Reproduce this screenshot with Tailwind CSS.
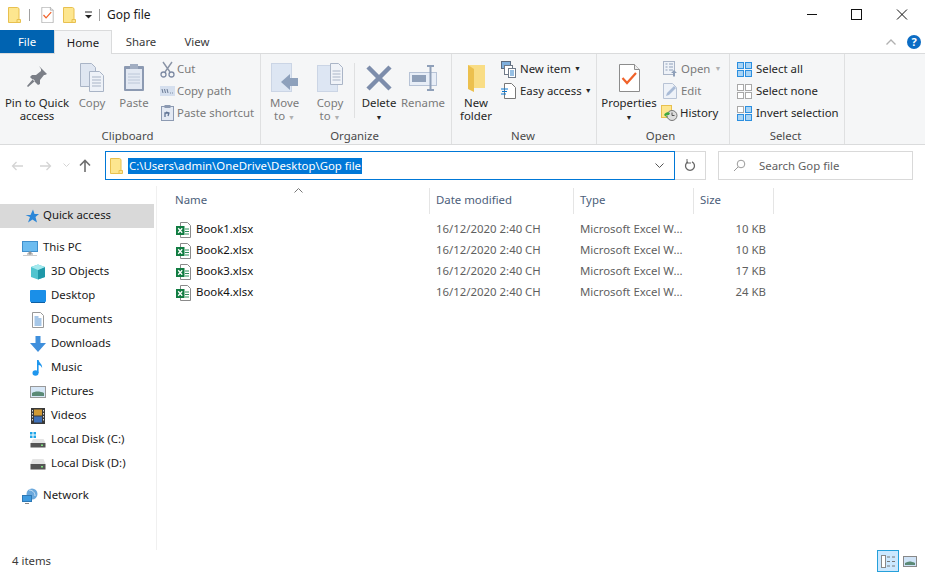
<!DOCTYPE html>
<html lang="en">
<head>
<meta charset="UTF-8">
<title>Gop file</title>
<script src="https://cdn.jsdelivr.net/npm/@tailwindcss/browser@4"></script>
</head>
<body class="bg-white">
<svg width="0" height="0" class="absolute">
  <defs>
    <symbol id="folder" viewBox="0 0 13 16" preserveAspectRatio="none"><path d="M.5.500h9l1.500 1v14H.5z" fill="#fde68f" stroke="#e8c04f"/><path d="M9 12.500h3.500v3H9z" fill="#fde68f" stroke="#e8c04f"/></symbol>
    <symbol id="xls" viewBox="0 0 17 16"><path d="M5.500 .5h7l3 3v12h-10z" fill="#fff" stroke="#8a8a8a"/><path d="M10 7h4M10 9.500h4M10 12h4" stroke="#2f8f5b"/><rect x="1" y="4" width="8.500" height="9" fill="#107c41"/><path d="M3.200 6.200l4 4.600M7.200 6.200l-4 4.600" stroke="#fff" stroke-width="1.300"/></symbol>
    <symbol id="prop" viewBox="0 0 21 28"><path d="M.5.500h15l5 5v22h-20z" fill="#fff" stroke="#8c8c8c"/><path d="M15.500.500v5h5" fill="#eee" stroke="#8c8c8c"/><path d="M3.500 14l4.500 5 9-10" fill="none" stroke="#f0622a" stroke-width="2.200"/></symbol>
    <symbol id="tile" viewBox="0 0 15 15"><rect x=".5" y=".5" width="6" height="6"/><rect x="8.500" y=".5" width="6" height="6"/><rect x=".5" y="8.500" width="6" height="6"/><rect x="8.500" y="8.500" width="6" height="6"/></symbol>
    <symbol id="disk" viewBox="0 0 16 12"><path d="M2.500 1h11l2 5h-15z" fill="#e4e4e4"/><rect x="0.500" y="6" width="15" height="5.500" fill="#555"/><rect x="11" y="8" width="2" height="1.500" fill="#7fe07f"/></symbol>
  </defs>
</svg>

<div class="w-[925px] h-[572px] overflow-hidden flex flex-col text-[11.4px] leading-[16px] text-[#1a1a1a] font-['Noto_Sans',sans-serif]">

  <!-- Title bar -->
  <div class="h-[30px] flex items-center shrink-0">
    <svg class="w-[13px] h-[16px] ml-[8px] shrink-0"><use href="#folder"/></svg>
    <div class="w-px h-[12px] bg-[#a0a0a0] ml-[8px]"></div>
    <svg class="w-[13px] h-[16px] ml-[11px] shrink-0"><use href="#prop"/></svg>
    <svg class="w-[13px] h-[16px] ml-[9px] shrink-0"><use href="#folder"/></svg>
    <svg class="w-[9px] h-[8px] ml-[8px] shrink-0" viewBox="0 0 9 8"><path d="M1 1h7" stroke="#222"/><path d="M1 4h7l-3.500 3.500z" fill="#222"/></svg>
    <div class="w-px h-[12px] bg-[#a0a0a0] ml-[6px]"></div>
    <span class="ml-[7px] text-[12px]">Gop file</span>
    <div class="ml-auto flex items-center">
      <svg class="w-[46px] h-[30px]" viewBox="0 0 46 30"><path d="M20 14.500h10" stroke="#111"/></svg>
      <svg class="w-[46px] h-[30px]" viewBox="0 0 46 30"><rect x="18.500" y="9.500" width="10" height="10" fill="none" stroke="#111"/></svg>
      <svg class="w-[46px] h-[30px]" viewBox="0 0 46 30"><path d="M18 9.500l10 10M28 9.500l-10 10" stroke="#111"/></svg>
    </div>
  </div>

  <!-- Tabs -->
  <div class="h-[23px] flex shrink-0 relative items-stretch">
    <div class="w-[54px] bg-[#0063b1] text-white flex items-center justify-center">File</div>
    <div class="w-[58px] h-[24px] bg-[#f5f6f7] border border-b-0 border-[#dadbdc] flex items-center justify-center relative z-10">Home</div>
    <div class="w-[58px] flex items-center justify-center text-[#3a3a3a]">Share</div>
    <div class="w-[54px] flex items-center justify-center text-[#3a3a3a]">View</div>
    <div class="ml-auto flex items-center">
      <svg class="w-[12px] h-[8px] mr-[10px]" viewBox="0 0 12 8"><path d="M1.500 6.500l4.500-4.500 4.500 4.500" fill="none" stroke="#b0b0b0" stroke-width="1.300"/></svg>
      <div class="w-[14px] h-[14px] mr-[4px] rounded-full bg-[#0b6cc4] text-white font-bold text-[11px] leading-[14px] text-center">?</div>
    </div>
  </div>

  <!-- Ribbon -->
  <div class="h-[92px] shrink-0 bg-[#f5f6f7] border-y border-[#dadbdc] flex text-[#7a7a7a]">
    <!-- Clipboard -->
    <div class="w-[261px] h-full border-r border-[#dfe0e1] flex flex-col shrink-0">
      <div class="h-[72px] flex">
        <div class="w-[74px] flex flex-col items-center text-[#262626] text-center">
          <svg class="w-[22px] h-[26px] mt-[11px] mb-[5px]" viewBox="0 0 22 26"><path d="M13 1l8 8-2 1-1 0-4 5 0 4-2 1-8-8 2-2h4l5-4v-2zM7 14l-6 7 1 1 7-6z" fill="#7b7f87"/></svg>
          <div class="leading-[13px]">Pin to Quick<br>access</div>
        </div>
        <div class="w-[36px] flex flex-col items-center">
          <svg class="w-[24px] h-[29px] mt-[9px] mb-[4px]" viewBox="0 0 24 29"><path d="M.5.500h11l4 4v19h-15z" fill="#dfe6f1" stroke="#a9b4c6"/><path d="M9.500 8.500h10l4 4v16h-14z" fill="#eef2f8" stroke="#a9b4c6"/><path d="M12 14h9M12 17h9M12 20h9M12 23h9" stroke="#a9b4c6"/></svg>
          <div class="leading-[13px]">Copy</div>
        </div>
        <div class="w-[48px] flex flex-col items-center">
          <svg class="w-[22px] h-[29px] mt-[9px] mb-[4px]" viewBox="0 0 22 29"><rect x="1" y="3" width="20" height="25" rx="1" fill="#8c9ab2"/><rect x="3" y="6" width="16" height="20" fill="#e3e9f3"/><rect x="7" y="1" width="8" height="5" fill="#a2aec2"/><path d="M5 11h12M5 14h12M5 17h12M5 20h12" stroke="#bcc7d8"/></svg>
          <div class="leading-[13px]">Paste</div>
        </div>
        <div class="flex flex-col ml-[2px] pt-[4px]">
          <div class="h-[22px] flex items-center gap-[2px]"><svg class="w-[15px] h-[17px]" viewBox="0 0 15 17"><path d="M3 1l7 10M12 1L5 11" stroke="#8a94a6" stroke-width="1.400"/><circle cx="3.500" cy="13.500" r="2.500" fill="none" stroke="#7d8aa3" stroke-width="1.300"/><circle cx="11.500" cy="13.500" r="2.500" fill="none" stroke="#7d8aa3" stroke-width="1.300"/></svg>Cut</div>
          <div class="h-[22px] flex items-center gap-[2px]"><svg class="w-[15px] h-[10px]" viewBox="0 0 15 10"><rect width="15" height="10" fill="#d5dfee"/><path d="M2 3l1 4M4.500 3l1 4M7 3l1 4M10 7h.8M12 7h.8" stroke="#6b7b95"/></svg>Copy path</div>
          <div class="h-[22px] flex items-center gap-[2px]"><svg class="w-[15px] h-[16px]" viewBox="0 0 13 16"><rect x=".5" y="1.500" width="12" height="14" fill="#e3e9f3" stroke="#8c9ab2"/><rect x="3.500" y="0" width="6" height="3" fill="#8c9ab2"/><path d="M4 12V8h4M5 7l3 1-1 3" fill="none" stroke="#5f7394" stroke-width="1.300"/></svg>Paste shortcut</div>
        </div>
      </div>
      <div class="text-center text-[#4a4a4a] pr-[5px] mt-[3px]">Clipboard</div>
    </div>

    <!-- Organize -->
    <div class="w-[191px] h-full border-r border-[#dfe0e1] flex flex-col shrink-0">
      <div class="h-[72px] flex">
        <div class="w-[47px] flex flex-col items-center">
          <svg class="w-[28px] h-[29px] mt-[9px] mb-[4px]" viewBox="0 0 28 29"><rect x=".5" y=".5" width="20" height="28" fill="#dde6f3" stroke="#cbd5e5"/><path d="M10 19l9-8v4h8v8h-8v4z" fill="#8ea1bc"/></svg>
          <div class="leading-[13px] text-center">Move<br>to <span class="text-[#b0b0b0] text-[7px]">▼</span></div>
        </div>
        <div class="w-[44px] flex flex-col items-center">
          <svg class="w-[26px] h-[29px] mt-[9px] mb-[4px]" viewBox="0 0 26 29"><rect x=".5" y="2.500" width="20" height="26" fill="#dde6f3" stroke="#cbd5e5"/><path d="M13.500.5h8l4 4v17h-12z" fill="#f0f3f8" stroke="#aab5c7"/><path d="M15.500 8h8M15.500 11h8M15.500 14h8M15.500 17h8" stroke="#aab5c7"/></svg>
          <div class="leading-[13px] text-center">Copy<br>to <span class="text-[#b0b0b0] text-[7px]">▼</span></div>
        </div>
        <div class="w-px h-[55px] bg-[#dfe0e1] mt-[9px] ml-[2px]"></div>
        <div class="w-[48px] flex flex-col items-center text-[#262626]">
          <svg class="w-[26px] h-[26px] mt-[11px] mb-[5px]" viewBox="0 0 26 26"><path d="M2 2l22 22M24 2L2 24" stroke="#7d8dab" stroke-width="4.500"/></svg>
          <div class="leading-[13px] text-center">Delete<br><span class="text-[7px]">▼</span></div>
        </div>
        <div class="w-[40px] flex flex-col items-center">
          <svg class="w-[28px] h-[26px] mt-[11px] mb-[5px]" viewBox="0 0 28 26"><rect x=".5" y="7.500" width="27" height="13" fill="#e8eef7" stroke="#b7c3d6"/><rect x="3" y="10" width="14" height="7" fill="#8fa0b9"/><path d="M18 1h7M21.500 1v24M18 25h7" stroke="#8fa0b9" stroke-width="2"/></svg>
          <div class="leading-[13px] text-center">Rename</div>
        </div>
      </div>
      <div class="text-center text-[#4a4a4a] mt-[3px] pr-[3px]">Organize</div>
    </div>

    <!-- New -->
    <div class="w-[145px] h-full border-r border-[#dfe0e1] flex flex-col shrink-0">
      <div class="h-[72px] flex">
        <div class="w-[48px] flex flex-col items-center text-[#262626]">
          <svg class="w-[19px] h-[28px] mt-[10px] mb-[4px]" viewBox="0 0 19 28"><path d="M1 1h17v23H1z" fill="#f9dd85"/><path d="M1 1l6 4v23l-6-3z" fill="#ecc04e"/></svg>
          <div class="leading-[13px] text-center">New<br>folder</div>
        </div>
        <div class="flex flex-col ml-[1px] pt-[4px] text-[#262626]">
          <div class="h-[22px] flex items-center gap-[4px]"><svg class="w-[15px] h-[17px]" viewBox="0 0 15 17"><rect x=".5" y=".5" width="9" height="7" fill="#7fb0de" stroke="#5b6b80"/><rect x="3.500" y="4.500" width="8" height="9" fill="#fff" stroke="#6f7a89"/><rect x="7.500" y="7.500" width="7" height="9" fill="#fff" stroke="#6f7a89"/><path d="M9 10h4M9 12h4M9 14h4" stroke="#2f80c9"/></svg>New item <span class="text-[7px] -ml-[1px]">▼</span></div>
          <div class="h-[22px] flex items-center gap-[4px]"><svg class="w-[15px] h-[16px]" viewBox="0 0 15 16"><path d="M3.500.5h7l4 4v11h-11z" fill="#fff" stroke="#777"/><path d="M0 6h7M1 8.500h5M0 11h5" stroke="#0a78d1"/></svg>Easy access <span class="text-[7px] -ml-[1px]">▼</span></div>
        </div>
      </div>
      <div class="text-center text-[#4a4a4a] mt-[3px] pr-[2px]">New</div>
    </div>

    <!-- Open -->
    <div class="w-[133px] h-full border-r border-[#dfe0e1] flex flex-col shrink-0">
      <div class="h-[72px] flex">
        <div class="w-[64px] flex flex-col items-center text-[#262626]">
          <svg class="w-[21px] h-[28px] mt-[10px] mb-[4px]"><use href="#prop"/></svg>
          <div class="leading-[13px] text-center">Properties<br><span class="text-[7px]">▼</span></div>
        </div>
        <div class="flex flex-col pt-[4px] ml-[2px]">
          <div class="h-[22px] flex items-center gap-[3px]"><svg class="w-[15px] h-[16px]" viewBox="0 0 15 16"><rect x=".5" y=".5" width="11" height="13" fill="#eef2f8" stroke="#aab5c7"/><path d="M2.500 3h2M2.500 6h2M2.500 9h2M6 3h4M6 6h4M6 9h4" stroke="#8fa0b9"/><path d="M8 12l3-3 3 3h-2v3.500h-2V12z" fill="#8fa0b9"/></svg>Open <span class="text-[#b0b0b0] text-[7px] ml-[1px]">▼</span></div>
          <div class="h-[22px] flex items-center gap-[3px]"><svg class="w-[15px] h-[16px]" viewBox="0 0 15 16"><path d="M.5.500h9l4 4v11H.5z" fill="#eef2f8" stroke="#b8c3d5"/><path d="M3 13l1-3 7-7 2 2-7 7z" fill="#a9bbd6"/></svg>Edit</div>
          <div class="h-[22px] flex items-center gap-[2px] -ml-[2px] text-[#262626]"><svg class="w-[17px] h-[16px]" viewBox="0 0 17 16"><rect x=".5" y=".5" width="10" height="12" fill="#fde68f" stroke="#e8c04f"/><circle cx="11" cy="10.500" r="5" fill="#ddd" stroke="#777"/><path d="M11 7.500v3h2.500" fill="none" stroke="#555"/><path d="M3 10a4 4 0 0 1 6-2l-1 2h-3l1.500 3z" fill="#3fa93f"/></svg>History</div>
        </div>
      </div>
      <div class="text-center text-[#4a4a4a] mt-[3px] pr-[5px]">Open</div>
    </div>

    <!-- Select -->
    <div class="w-[115px] h-full border-r border-[#dfe0e1] flex flex-col shrink-0 text-[#262626]">
      <div class="h-[72px] flex flex-col pt-[4px] pl-[7px]">
        <div class="h-[22px] flex items-center gap-[4px]"><svg class="w-[15px] h-[15px] fill-[#a9d4f5] stroke-[#2b8fe0]"><use href="#tile"/></svg>Select all</div>
        <div class="h-[22px] flex items-center gap-[4px]"><svg class="w-[15px] h-[15px] fill-white stroke-[#a8a8a8]"><use href="#tile"/></svg>Select none</div>
        <div class="h-[22px] flex items-center gap-[4px]"><svg class="w-[15px] h-[15px]" viewBox="0 0 15 15"><rect x=".5" y=".5" width="6" height="6" fill="#fff" stroke="#a8a8a8"/><rect x="8.500" y=".5" width="6" height="6" fill="#a9d4f5" stroke="#2b8fe0"/><rect x=".5" y="8.500" width="6" height="6" fill="#a9d4f5" stroke="#2b8fe0"/><rect x="8.500" y="8.500" width="6" height="6" fill="#a9d4f5" stroke="#2b8fe0"/></svg>Invert selection</div>
      </div>
      <div class="text-center text-[#4a4a4a] mt-[3px] pr-[3px]">Select</div>
    </div>
  </div>

  <!-- Address bar -->
  <div class="h-[41px] shrink-0 flex items-start pt-[6px]">
    <div class="w-[105px] h-[29px] flex items-center shrink-0">
      <svg class="w-[12px] h-[10px] ml-[11px]" viewBox="0 0 12 10"><path d="M5.500 1L1.500 5l4 4M1.500 5H12" fill="none" stroke="#d4d4d4" stroke-width="1.300"/></svg>
      <svg class="w-[12px] h-[10px] ml-[17px]" viewBox="0 0 12 10"><path d="M6.500 1l4 4-4 4M10.500 5H0" fill="none" stroke="#d4d4d4" stroke-width="1.300"/></svg>
      <svg class="w-[7px] h-[5px] ml-[11px]" viewBox="0 0 7 5"><path d="M.5.500l3 3 3-3" fill="none" stroke="#d4d4d4"/></svg>
      <svg class="w-[12px] h-[13px] ml-[9px]" viewBox="0 0 12 13"><path d="M6 1.500v11.500M1 6.500l5-5 5 5" fill="none" stroke="#6f6f6f" stroke-width="1.600"/></svg>
    </div>
    <div class="w-[570px] h-[29px] border border-[#0078d7] flex items-center shrink-0">
      <svg class="w-[13px] h-[16px] ml-[4px]"><use href="#folder"/></svg>
      <span class="ml-[5px] bg-[#0078d7] text-white h-[16px] px-px leading-[16px]">C:\Users\admin\OneDrive\Desktop\Gop file</span>
      <svg class="w-[9px] h-[5px] ml-auto mr-[10px]" viewBox="0 0 9 5"><path d="M.5.500l4 4 4-4" fill="none" stroke="#555"/></svg>
    </div>
    <div class="w-[31px] h-[29px] border border-l-0 border-[#d9d9d9] flex items-center justify-center shrink-0">
      <svg class="w-[12px] h-[13px]" viewBox="0 0 12 13"><path d="M4 2.800a4.500 4.500 0 1 0 4 0" fill="none" stroke="#666" stroke-width="1.300"/><path d="M3 0v4h4" fill="none" stroke="#666"/></svg>
    </div>
    <div class="w-[195px] h-[29px] ml-[12px] border border-[#d9d9d9] flex items-center text-[#5f5f5f] shrink-0">
      <svg class="w-[13px] h-[13px] ml-[14px]" viewBox="0 0 13 13"><circle cx="8" cy="5" r="3.800" fill="none" stroke="#9a9a9a"/><path d="M5 8l-4 4" stroke="#9a9a9a"/></svg>
      <span class="ml-[13px]">Search Gop file</span>
    </div>
  </div>

  <!-- Body -->
  <div class="flex-1 flex min-h-0">
    <!-- Navigation pane -->
    <div class="w-[157px] shrink-0 border-r border-[#f0f0f0] pt-[18px]">
      <div class="w-[154px] h-[24px] bg-[#d9d9d9] flex items-center pl-[25px] gap-[4px]">
        <svg class="w-[14px] h-[14px]" viewBox="0 0 14 14"><path d="M8 .5l1.500 4.500H14l-3.500 3 1.500 5.500-4.500-3-4.500 3L5 8 .5 6h5z" fill="#2a86d8"/></svg><span class="mb-[2px]">Quick access</span>
      </div>
      <div class="h-[24px] flex items-center pl-[22px] gap-[5px] mt-[8px]">
        <svg class="w-[16px] h-[15px]" viewBox="0 0 16 15"><rect x=".5" y=".5" width="15" height="10" fill="#6cbcf0" stroke="#3f8fcc"/><path d="M5 13h6M7 11h2v2H7z" fill="#999" stroke="#999"/><path d="M1 14.500h14" stroke="#ccc"/></svg><span class="mb-[2px]">This PC</span>
      </div>
      <div class="h-[24px] flex items-center pl-[30px] gap-[5px]">
        <svg class="w-[16px] h-[16px]" viewBox="0 0 16 16"><path d="M8 .5l7 2.500v10l-7 2.500-7-2.500V3z" fill="#4fc4cf"/><path d="M8 6v9.500l7-2.500V3z" fill="#1f98a8"/><path d="M1 3l7 3 7-3-7-2.500z" fill="#a4e9ee"/></svg><span class="mb-[2px]">3D Objects</span>
      </div>
      <div class="h-[24px] flex items-center pl-[30px] gap-[5px]">
        <svg class="w-[16px] h-[13px]" viewBox="0 0 16 13"><rect width="16" height="12" rx="1" fill="#1a8fe8"/><path d="M1 12.500h14" stroke="#0d5fa3"/></svg><span class="mb-[2px]">Desktop</span>
      </div>
      <div class="h-[24px] flex items-center pl-[30px] gap-[5px]">
        <svg class="w-[16px] h-[16px]" viewBox="0 0 16 16"><path d="M2.500.5h8l3 3v12h-11z" fill="#fff" stroke="#999"/><path d="M4.500 5h4M4.500 7h7M4.500 9h7M4.500 11h7M4.500 13h7" stroke="#4f8fd0"/></svg><span class="mb-[2px]">Documents</span>
      </div>
      <div class="h-[24px] flex items-center pl-[30px] gap-[5px]">
        <svg class="w-[16px] h-[16px]" viewBox="0 0 16 16"><path d="M5.500 0h5v7H16l-8 9-8-9h5.500z" fill="#3f8fdc"/></svg><span class="mb-[2px]">Downloads</span>
      </div>
      <div class="h-[24px] flex items-center pl-[30px] gap-[5px]">
        <svg class="w-[16px] h-[16px]" viewBox="0 0 16 16"><ellipse cx="5.500" cy="13" rx="3" ry="2.700" fill="#1e96ee"/><path d="M7 0h1.600c.5 3 4 4 3.500 8-1-2-2-3-3.500-3v8H7z" fill="#1e96ee"/></svg><span class="mb-[2px]">Music</span>
      </div>
      <div class="h-[24px] flex items-center pl-[30px] gap-[5px]">
        <svg class="w-[16px] h-[12px]" viewBox="0 0 16 12"><rect x=".5" y=".5" width="15" height="11" fill="#d7e7f7" stroke="#999"/><path d="M2 7c3-2 8-2 12 0v3H2z" fill="#5b8a76"/></svg><span class="mb-[2px]">Pictures</span>
      </div>
      <div class="h-[24px] flex items-center pl-[30px] gap-[5px]">
        <svg class="w-[16px] h-[16px]" viewBox="0 0 16 16"><rect x="1" width="14" height="16" fill="#3a3a3a"/><rect x="4" y="1.500" width="8" height="6" fill="#d09a35"/><rect x="4" y="8.500" width="8" height="6" fill="#3f70b8"/><path d="M2.500 2v12M13.500 2v12" stroke="#ddd" stroke-dasharray="1.500 1.500"/></svg><span class="mb-[2px]">Videos</span>
      </div>
      <div class="h-[24px] flex items-center pl-[30px] gap-[5px]">
        <svg class="w-[16px] h-[16px]" viewBox="0 0 16 16"><rect x="0" y="0" width="2.500" height="2.500" fill="#1ea5e8"/><rect x="3.500" y="0" width="2.500" height="2.500" fill="#1ea5e8"/><rect x="0" y="3.500" width="2.500" height="2.500" fill="#1ea5e8"/><rect x="3.500" y="3.500" width="2.500" height="2.500" fill="#1ea5e8"/><path d="M3 7h10.500l2 4H1z" fill="#e4e4e4"/><rect x=".5" y="11" width="15" height="4.500" fill="#555"/><rect x="11" y="12.500" width="2" height="1.500" fill="#7fe07f"/></svg><span class="mb-[2px]">Local Disk (C:)</span>
      </div>
      <div class="h-[24px] flex items-center pl-[30px] gap-[5px]">
        <svg class="w-[16px] h-[12px]"><use href="#disk"/></svg><span class="mb-[2px]">Local Disk (D:)</span>
      </div>
      <div class="h-[24px] flex items-center pl-[22px] gap-[5px] mt-[8px]">
        <svg class="w-[16px] h-[16px]" viewBox="0 0 16 16"><circle cx="10" cy="6" r="5.500" fill="#6aa8dc"/><path d="M7 2c3 0 6 2 6 6" fill="none" stroke="#cfe5f6"/><rect x=".5" y="7.500" width="9" height="6" fill="#3f9be0" stroke="#2d78b5"/><path d="M3 15.500h4" stroke="#888"/></svg><span class="mb-[2px]">Network</span>
      </div>
    </div>

    <!-- File list -->
    <div class="flex-1 relative pl-[12px] pt-[2px]">
      <svg class="absolute left-[137px] top-[2px] w-[9px] h-[5px]" viewBox="0 0 9 5"><path d="M.5 4.500l4-4 4 4" fill="none" stroke="#777"/></svg>
      <div class="grid grid-cols-[261px_144px_120px_80px] h-[26px] text-[#4c607a]">
        <div class="border-r border-[#e5e5e5] pl-[6px] pb-[2px] flex items-center">Name</div>
        <div class="border-r border-[#e5e5e5] pl-[6px] pb-[2px] flex items-center">Date modified</div>
        <div class="border-r border-[#e5e5e5] pl-[6px] pb-[2px] flex items-center">Type</div>
        <div class="border-r border-[#e5e5e5] pl-[6px] pb-[2px] flex items-center">Size</div>
      </div>
      <div class="pt-[5px]">
        <div class="grid grid-cols-[261px_144px_120px_72px] h-[21px] items-center text-[#5f5f5f]">
          <div class="pl-[6px] flex items-center gap-[4px] text-[#111]"><svg class="w-[17px] h-[16px]"><use href="#xls"/></svg><span class="mb-[2px]">Book1.xlsx</span></div>
          <div class="pl-[6px] mb-[2px]">16/12/2020 2:40 CH</div><div class="pl-[6px] mb-[2px]">Microsoft Excel W...</div><div class="text-right mb-[2px]">10 KB</div>
        </div>
        <div class="grid grid-cols-[261px_144px_120px_72px] h-[21px] items-center text-[#5f5f5f]">
          <div class="pl-[6px] flex items-center gap-[4px] text-[#111]"><svg class="w-[17px] h-[16px]"><use href="#xls"/></svg><span class="mb-[2px]">Book2.xlsx</span></div>
          <div class="pl-[6px] mb-[2px]">16/12/2020 2:40 CH</div><div class="pl-[6px] mb-[2px]">Microsoft Excel W...</div><div class="text-right mb-[2px]">10 KB</div>
        </div>
        <div class="grid grid-cols-[261px_144px_120px_72px] h-[21px] items-center text-[#5f5f5f]">
          <div class="pl-[6px] flex items-center gap-[4px] text-[#111]"><svg class="w-[17px] h-[16px]"><use href="#xls"/></svg><span class="mb-[2px]">Book3.xlsx</span></div>
          <div class="pl-[6px] mb-[2px]">16/12/2020 2:40 CH</div><div class="pl-[6px] mb-[2px]">Microsoft Excel W...</div><div class="text-right mb-[2px]">17 KB</div>
        </div>
        <div class="grid grid-cols-[261px_144px_120px_72px] h-[21px] items-center text-[#5f5f5f]">
          <div class="pl-[6px] flex items-center gap-[4px] text-[#111]"><svg class="w-[17px] h-[16px]"><use href="#xls"/></svg><span class="mb-[2px]">Book4.xlsx</span></div>
          <div class="pl-[6px] mb-[2px]">16/12/2020 2:40 CH</div><div class="pl-[6px] mb-[2px]">Microsoft Excel W...</div><div class="text-right mb-[2px]">24 KB</div>
        </div>
      </div>
    </div>
  </div>

  <!-- Status bar -->
  <div class="h-[22px] shrink-0 flex items-center pl-[12px] text-[#3a3a3a]">
    <span>4 items</span>
    <div class="ml-auto flex items-center mr-[8px] gap-[4px]">
      <div class="w-[22px] h-[22px] bg-[#cce8ff] border border-[#26a0da] flex items-center justify-center">
        <svg class="w-[15px] h-[13px]" viewBox="0 0 15 13"><rect x=".5" y=".5" width="4" height="12" fill="#fff" stroke="#888"/><path d="M6 2h3M11 2h3M6 6.500h3M11 6.500h3M6 11h3M11 11h3" stroke="#777"/></svg>
      </div>
      <svg class="w-[14px] h-[11px]" viewBox="0 0 14 11"><rect x=".5" y=".5" width="13" height="10" fill="#cfe3f7" stroke="#888"/><path d="M2 7c3-2 6-2 10 0v2H2z" fill="#5b8a76"/></svg>
    </div>
  </div>
</div>
</body>
</html>
